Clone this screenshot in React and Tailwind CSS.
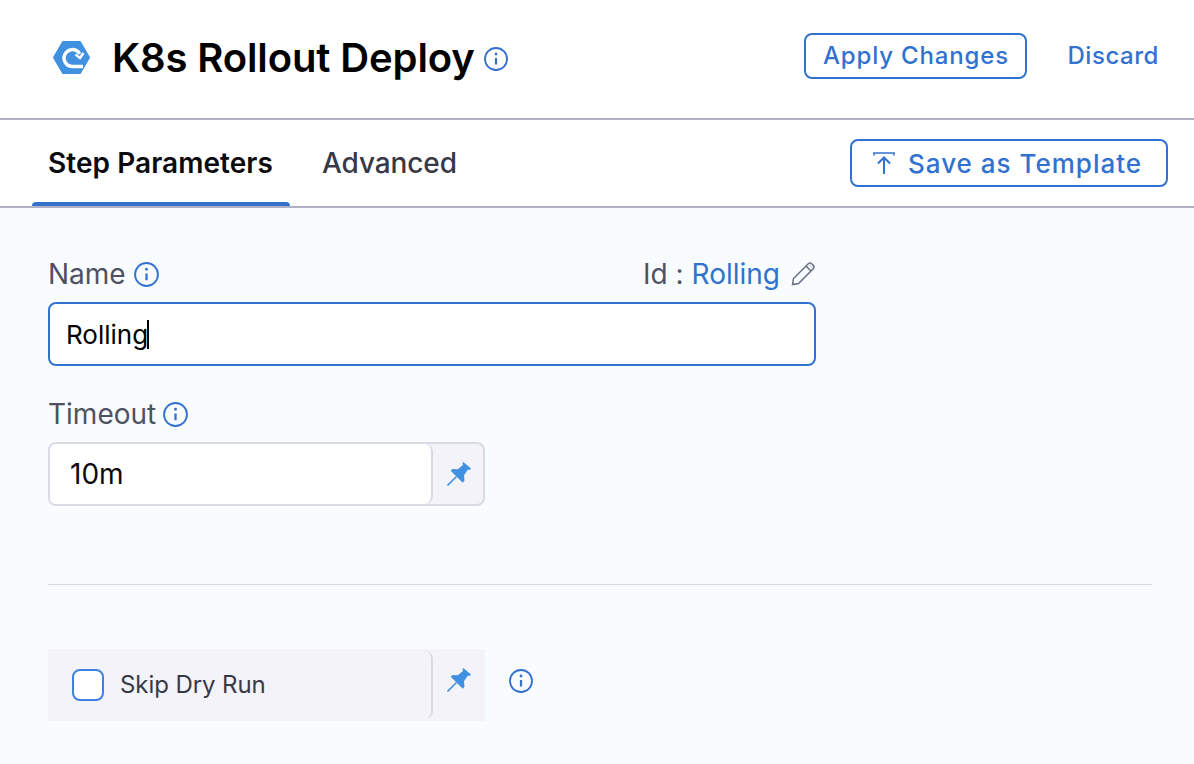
const Info = ({ className = "" }) => (
  <svg viewBox="0 0 24 24" fill="none" stroke="#3272ce" strokeWidth="1.8" className={`w-6 h-6 shrink-0 ${className}`}>
    <circle cx="12" cy="12" r="11" />
    <path d="M12 11v6.5" strokeWidth="2.2" />
    <circle cx="12" cy="7" r="1.4" fill="#3272ce" stroke="none" />
  </svg>
);

const Pin = () => (
  <svg viewBox="0 0 24 24" className="w-6 h-6 shrink-0">
    <path fill="#4191e2" d="M16.3 0 L24 6.5 L22.6 8 L21 7.5 L17 13.2 L17.4 18.8 L15.7 20.7 L3.7 8.7 L5.5 7 L10.8 7.2 L16 3 L15.4 1.3 Z" />
    <path stroke="#4191e2" strokeWidth="1.6" d="M9.5 14.5 L0.5 23.5" />
  </svg>
);

export default function App() {
  return (
    <div className="w-[1194px] h-[764px] overflow-hidden bg-white flex flex-col font-['Inter',sans-serif]">
      <header className="h-[120px] shrink-0 border-b-2 border-[#b0b1c3] flex items-start pl-[53px] pr-[35px]">
        <svg viewBox="0 0 37 33" className="w-[37px] h-[33px] mt-[41px] shrink-0">
          <path fill="#4191e2" stroke="#4191e2" strokeWidth="2" strokeLinejoin="round" d="M10 1 H27 L36 16.5 L27 32 H10 L1 16.5 Z" />
          <path fill="none" stroke="#fff" strokeWidth="3.4" d="M30 25.5 H19 A8.5 8.5 0 1 1 25 10.5 Q26 11.5 26.5 13" />
          <path fill="none" stroke="#fff" strokeWidth="2.4" d="M22.5 13.5 L27 17 L30.5 12" />
        </svg>
        <h1 className="ml-[22px] mt-[34px] text-[40px] leading-[48px] font-semibold text-black tracking-[-0.12px] whitespace-nowrap">K8s Rollout Deploy</h1>
        <Info className="ml-[9px] mt-[47px]" />
        <button className="ml-auto mt-[33px] w-[223px] h-[46px] border-2 border-[#3272ce] rounded-lg text-[24px] font-medium text-[#3272ce] tracking-[0.85px] flex items-center justify-center whitespace-nowrap">Apply Changes</button>
        <button className="ml-[40px] mt-[33px] h-[46px] text-[24px] font-medium text-[#3272ce] tracking-[0.55px] whitespace-nowrap">Discard</button>
      </header>

      <nav className="h-[88px] shrink-0 border-b-2 border-[#b0b1c3] flex items-start pl-[32px] pr-[26px]">
        <div className="relative h-[86px] w-[258px] pl-4 flex items-start">
          <span className="mt-[25px] text-[28px] leading-9 font-semibold text-[#0b0b0d] tracking-[0.05px] whitespace-nowrap">Step Parameters</span>
          <span className="absolute left-0 right-0 bottom-0 h-1 rounded-t bg-[#3272ce]" />
        </div>
        <span className="ml-8 mt-[25px] text-[28px] leading-9 font-medium text-[#383946] tracking-[-0.1px] whitespace-nowrap">Advanced</span>
        <button className="ml-auto mt-[19px] w-[318px] h-[48px] border-2 border-[#3272ce] rounded-lg flex items-center pl-[21px] gap-[13px] text-[26px] font-medium text-[#3272ce] tracking-[1px] whitespace-nowrap">
          <svg viewBox="0 0 22 24" fill="none" stroke="#3272ce" strokeWidth="2" className="w-[22px] h-6 shrink-0">
            <path d="M1 4.5 V2 H21 V4.5" strokeWidth="1.6" />
            <path d="M11 23 V7 M5 12.5 L11 6.5 L17 12.5" />
          </svg>
          Save as Template
        </button>
      </nav>

      <main className="flex-1 bg-[#f8fcff] pl-12 pr-[42px] flex flex-col">
        <div className="w-[768px] mt-[50px] h-8 flex items-center text-[28px] text-[#4f5162]">
          <span>Name</span>
          <Info className="ml-[8px] w-[25px] h-[25px]" />
          <span className="ml-auto">Id :&nbsp;</span>
          <span className="text-[#3272ce]">Rolling</span>
          <svg viewBox="0 0 24 24" fill="none" stroke="#6b6d85" strokeWidth="1.5" className="ml-3 w-6 h-6 shrink-0 -translate-x-px">
            <path d="M1.5 22.5 L2.5 16.5 L17.5 1.5 Q19 0.5 20.5 1.5 L22.5 3.5 Q23.5 5 22.5 6.5 L7.5 21.5 Z" />
            <path d="M15 4 L20 9" />
            <path fill="#d9dae5" stroke="none" d="M17.8 3 L21 6.3 L22 5 L19.5 2.2 Z" />
          </svg>
        </div>
        <div className="mt-[12px] w-[768px] h-16 bg-white border-2 border-[#3272ce] rounded-lg flex items-center pl-4 text-[26px] text-black">
          <span>Rolling</span>
          <span className="w-[2px] h-[29px] bg-black -ml-[1px]" />
        </div>

        <div className="mt-[32px] h-8 flex items-center text-[28px] text-[#4f5162]">
          <span>Timeout</span>
          <Info className="ml-[7px] w-[25px] h-[25px]" />
        </div>
        <div className="mt-3 w-[437px] h-16 bg-[#f4f3fa] border-2 border-[#d9dae5] rounded-lg flex">
          <div className="flex-1 bg-white border-r-2 border-[#d9dae5] rounded-r-lg rounded-l-md flex items-center pl-5 text-[28px] text-[#0b0b0d]">10m</div>
          <div className="w-[50px] pl-px flex items-center justify-center"><Pin /></div>
        </div>

        <div className="mt-[78px] h-px bg-[#d9dae5]" />

        <div className="mt-16 flex items-start">
          <div className="w-[437px] h-[72px] bg-[#f4f3fa] flex">
            <div className="flex-1 my-0.5 border-r-2 border-[#d9dae5] rounded-r-lg flex items-center pl-6">
              <span className="w-8 h-8 bg-white border-2 border-[#3d80de] rounded-lg shrink-0" />
              <span className="ml-4 text-[24px] text-[#383946] tracking-[-0.08px]">Skip Dry Run</span>
            </div>
            <div className="w-[52px] flex items-start justify-center pt-[19px]"><Pin /></div>
          </div>
          <Info className="ml-6 mt-5" />
        </div>
      </main>
    </div>
  );
}
